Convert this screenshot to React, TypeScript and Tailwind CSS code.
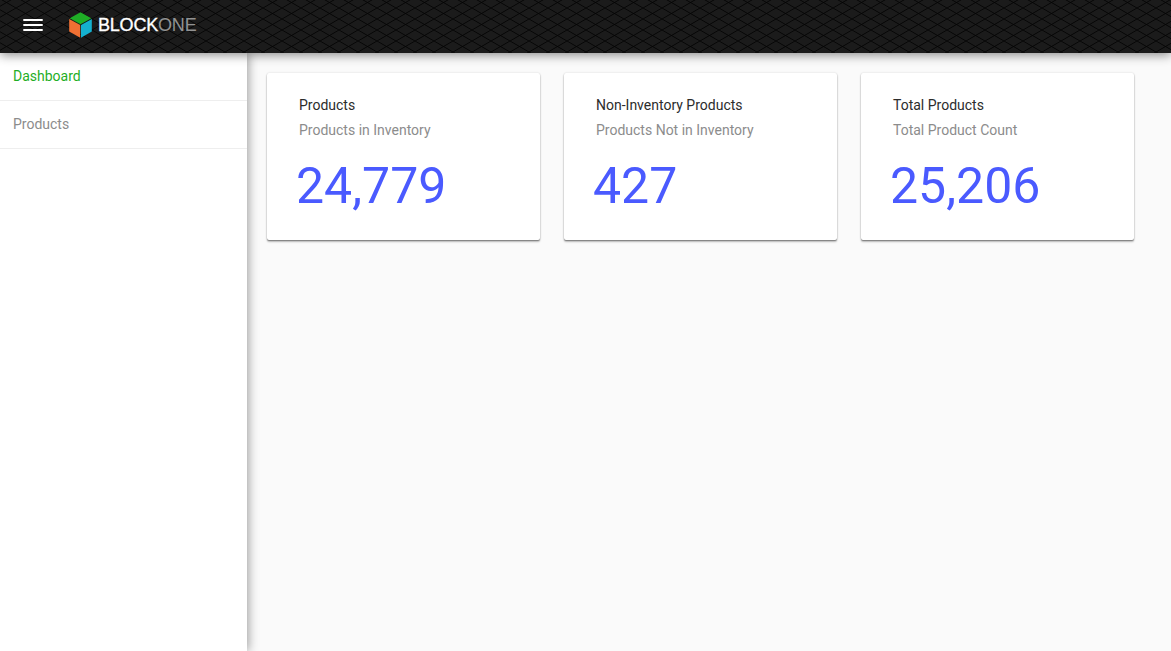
const cards = [
  { title: "Products", subtitle: "Products in Inventory", value: "24,779" },
  { title: "Non-Inventory Products", subtitle: "Products Not in Inventory", value: "427" },
  { title: "Total Products", subtitle: "Total Product Count", value: "25,206" },
];

function HeaderPattern() {
  return (
    <svg className="absolute inset-0 h-full w-full" aria-hidden="true">
      <defs>
        <pattern id="mesh" x="16" y="8" width="19" height="11" patternUnits="userSpaceOnUse">
          <path d="M-19 -11L38 22M-19 22L38 -11" stroke="#040404" strokeWidth="0.95" fill="none" />
        </pattern>
      </defs>
      <rect width="100%" height="100%" fill="url(#mesh)" />
    </svg>
  );
}

function Logo() {
  return (
    <div className="relative ml-[26px] flex items-center">
      <svg width="23" height="26" viewBox="0 0 24 27" aria-hidden="true">
        <path d="M12 0.2L23.3 6.5L12 12.8L0.7 6.5z" fill="#1fae26" />
        <path d="M0.2 7.2L11.7 13.6V26.8L0.2 20.2z" fill="#f07033" />
        <path d="M23.8 7.2L12.5 13.6V26.8L23.8 20.2z" fill="#14b0cf" />
      </svg>
      <span className="ml-[6px] font-['Liberation_Sans',Arial,sans-serif] text-[18px] leading-[26px] tracking-[-0.2px] text-[#929292]">
        <span className="text-white [-webkit-text-stroke:0.35px_white]">BLOCK</span>ONE
      </span>
    </div>
  );
}

export default function App() {
  return (
    <div className="flex h-[651px] w-full flex-col overflow-hidden bg-[#fafafa] font-[Roboto,sans-serif] text-sm">
      <header className="relative z-20 flex h-[53px] shrink-0 items-center bg-[#1b1b1b] pb-[3px] pl-[23px] shadow-[0_2px_10px_rgba(0,0,0,0.46)]">
        <HeaderPattern />
        <button className="relative h-3 w-5" aria-label="Menu">
          <svg width="20" height="12" viewBox="0 0 20 12" className="block" aria-hidden="true">
            <path d="M0.3 0H19.7V2H0.3zM0.3 5H19.7V7H0.3zM0.3 10H19.7V12H0.3z" fill="#fff" />
          </svg>
        </button>
        <Logo />
      </header>
      <div className="flex min-h-0 flex-1">
        <nav className="z-10 w-[247px] shrink-0 bg-white shadow-[1px_0_10px_rgba(0,0,0,0.4)]">
          <a className="flex h-12 items-center border-b border-[#eeeeee] pb-0.5 pl-[13px] text-[#1fae26]">Dashboard</a>
          <a className="flex h-12 items-center border-b border-[#eeeeee] pb-0.5 pl-[13px] text-[#8c8c8c]">Products</a>
        </nav>
        <main className="flex flex-1 items-start gap-6 pl-5 pt-5">
          {cards.map((card) => (
            <section
              key={card.title}
              className="h-[167px] w-[273px] rounded-[2px] bg-white pl-8 pt-[22px] shadow-[0_2px_2px_rgba(0,0,0,0.24),0_0_2px_rgba(0,0,0,0.16),0_1px_1px_rgba(0,0,0,0.3)]"
            >
              <h2 className="leading-5 text-[#2c2c2c]">{card.title}</h2>
              <p className="mt-[5px] leading-5 text-[#8c8c8c]">{card.subtitle}</p>
              <p className="-ml-[3px] mt-4 text-[50px] leading-[60px] text-[#4a5aff]">{card.value}</p>
            </section>
          ))}
        </main>
      </div>
    </div>
  );
}
